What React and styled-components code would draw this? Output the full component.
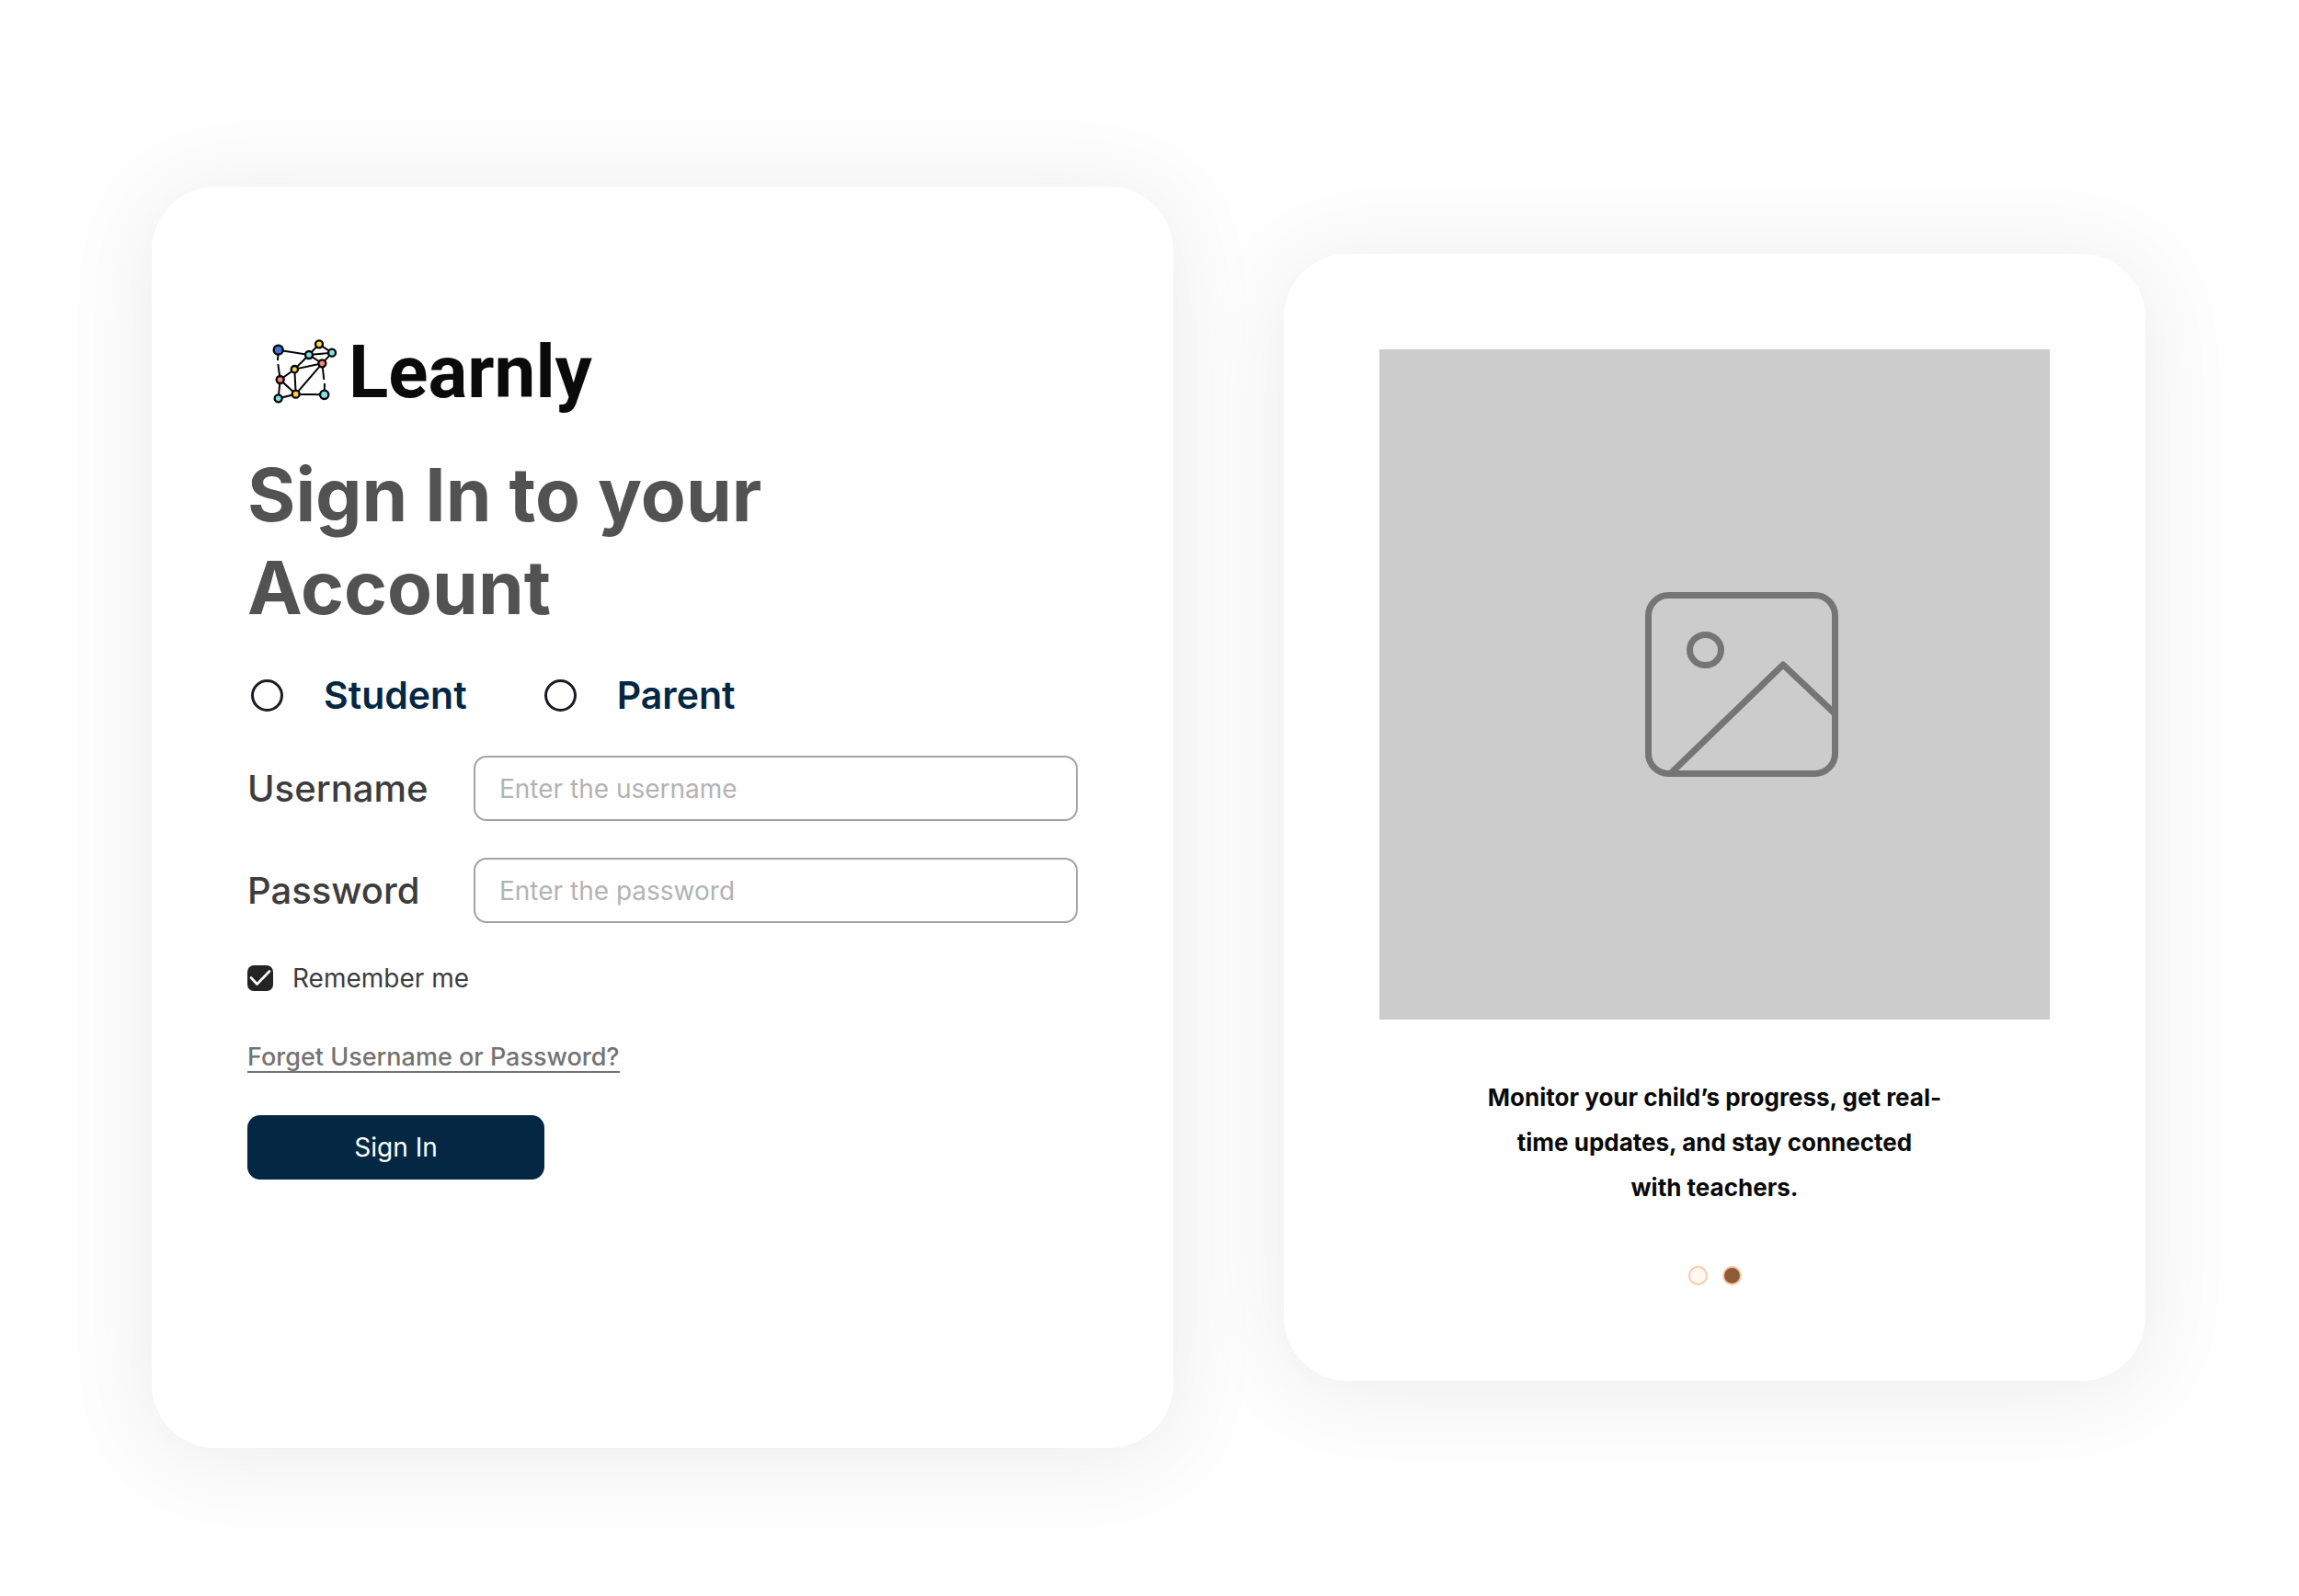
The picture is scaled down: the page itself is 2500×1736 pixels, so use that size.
import React, {useState} from 'react'
import styled, {createGlobalStyle} from 'styled-components'

const GlobalStyle = createGlobalStyle`
    *, *::before, *::after {
        box-sizing: border-box;
    }

    body {
        margin: 0;
        background: #fefefe;
        font-family: Inter, "Liberation Sans", sans-serif;
    }

    h1, p {
        margin: 0;
    }

    button, input {
        font-family: inherit;
        margin: 0;
    }
`

const Page = styled.main`
    display: grid;
    grid-template-columns: minmax(0, 1111fr) minmax(0, 937fr);
    align-items: center;
    gap: 120px;
    min-height: 100vh;
    padding: 203px 167px 162px 165px;
`

const Card = styled.section`
    border-radius: 70px;
    background: #fff;
    box-shadow: 0 8px 100px rgba(0, 0, 0, 0.08);
    padding: ${({$pad}) => $pad};
`

const Logo = styled.div`
    display: flex;
    align-items: center;
    gap: 11px;
    padding-left: 27px;
    margin-bottom: 34px;
`

const LogoName = styled.span`
    color: #0a0a0a;
    font-family: Roboto, Inter, sans-serif;
    font-size: 80px;
    font-weight: 700;
    line-height: 96px;
`

const Title = styled.h1`
    max-width: 700px;
    margin-bottom: 42px;
    color: #525252;
    font-size: 80px;
    font-weight: 700;
    line-height: 101px;
`

const Roles = styled.div`
    display: flex;
    gap: 84px;
    margin-bottom: 41px;
    padding-left: 4px;
`

const Role = styled.label`
    display: flex;
    align-items: center;
    gap: 44px;
    color: #042743;
    font-size: 41px;
    font-weight: 600;
    line-height: 50px;
`

const Radio = styled.input`
    appearance: none;
    width: 35px;
    height: 35px;
    border: 3px solid #1d1b20;
    border-radius: 50%;

    &:checked {
        background: #1d1b20;
        box-shadow: inset 0 0 0 5px #fff;
    }
`

const Field = styled.div`
    display: grid;
    grid-template-columns: 246px 1fr;
    align-items: center;
    margin-bottom: 40px;
`

const FieldLabel = styled.label`
    color: #3d3d3d;
    font-size: 40px;
    font-weight: 500;
    line-height: 50px;
`

const TextInput = styled.input`
    width: 100%;
    height: 71px;
    padding: 0 26px;
    border: 2px solid #a3a3a3;
    border-radius: 14px;
    background: #fff;
    color: #3d3d3d;
    font-size: 28px;

    &::placeholder {
        color: #b3b3b3;
        opacity: 1;
    }
`

const Remember = styled.label`
    display: flex;
    align-items: center;
    gap: 21px;
    margin: 43px 0 54px;
    color: #3d3d3d;
    font-size: 28px;
    line-height: 34px;
`

const Tick = styled.span`
    display: grid;

    > * {
        grid-area: 1 / 1;
    }
`

const Checkbox = styled.input`
    appearance: none;
    width: 28px;
    height: 28px;
    border: 2px solid #242424;
    border-radius: 7px;

    &:checked {
        background: #242424;
    }
`

const TickMark = styled.svg`
    pointer-events: none;
`

const ForgetLink = styled.a`
    display: table;
    margin-bottom: 46px;
    border-bottom: 2px solid #737373;
    color: #737373;
    font-size: 27px;
    font-weight: 500;
    line-height: 30px;
    text-decoration: none;
`

const SignInButton = styled.button`
    width: 323px;
    height: 70px;
    border: 0;
    border-radius: 14px;
    background: #042743;
    color: #fff;
    font-size: 28px;
    cursor: pointer;
`

const ImageBox = styled.div`
    display: flex;
    align-items: center;
    justify-content: center;
    aspect-ratio: 1;
    padding-left: 58px;
    background: #ccc;
`

const Caption = styled.p`
    max-width: 512px;
    margin: 60px auto 61px;
    color: #0a0a0a;
    font-size: 26px;
    font-weight: 700;
    line-height: 49px;
    text-align: center;
`

const Dots = styled.div`
    display: flex;
    justify-content: center;
    gap: 16px;
`

const Dot = styled.button`
    width: 21px;
    height: 21px;
    padding: 0;
    border: 2px solid #f8cba8;
    border-radius: 50%;
    background: ${({$active}) => $active ? '#8f5c38' : '#fff8f3'};
    cursor: pointer;
`

const edges = 'M68 93L168 109L201 74L243 102L168 109L121 156L211 137L168 109M243 102L211 137L125 237L121 156L74 190L125 237L218 239M74 190L68 251L125 237M68 93L66 127M67 139L74 190M211 137L217 190M219 202L218 239'

const nodes = [
    [68, 93, 15, '#3f73d8'],
    [201, 74, 12, '#fbdc3c'],
    [168, 109, 12, '#7fe3ea'],
    [243, 102, 12, '#7fe3ea'],
    [211, 137, 12, '#f9827c'],
    [121, 156, 11, '#fbd034'],
    [74, 190, 12, '#f9827c'],
    [125, 237, 12, '#fbd034'],
    [68, 251, 12, '#7fe3ea'],
    [218, 239, 14, '#7fe3ea'],
]

const LogoMark = () => (
    <svg width="72" height="72" viewBox="48 58 216 216" aria-hidden="true">
        <path d={edges} fill="none" stroke="#050505" strokeWidth="6" />
        {nodes.map(([x, y, r, fill]) => (
            <circle key={`${x}-${y}`} cx={x} cy={y} r={r} fill={fill} stroke="#050505" strokeWidth="7" />
        ))}
    </svg>
)

const Placeholder = () => (
    <svg width="210" height="201" viewBox="0 0 210 201" fill="none" stroke="#757575" strokeWidth="7" strokeLinejoin="round" aria-hidden="true">
        <rect x="3.5" y="3.5" width="203" height="194" rx="22" />
        <ellipse cx="65.5" cy="63" rx="17" ry="16.5" />
        <path d="M28 197L150 79L206 132" />
    </svg>
)

const App = () => {
    const [role, setRole] = useState('')
    const [remember, setRemember] = useState(true)
    const [slide, setSlide] = useState(1)

    return (
        <>
            <GlobalStyle />
            <Page>
                <Card as="form" $pad="154px 104px 292px" onSubmit={e => e.preventDefault()}>
                    <Logo>
                        <LogoMark />
                        <LogoName>Learnly</LogoName>
                    </Logo>
                    <Title>Sign In to your Account</Title>
                    <Roles>
                        {['Student', 'Parent'].map(name => (
                            <Role key={name}>
                                <Radio
                                    type="radio"
                                    name="role"
                                    checked={role === name}
                                    onChange={() => setRole(name)}
                                />
                                {name}
                            </Role>
                        ))}
                    </Roles>
                    <Field>
                        <FieldLabel htmlFor="username">Username</FieldLabel>
                        <TextInput id="username" type="text" placeholder="Enter the username" />
                    </Field>
                    <Field>
                        <FieldLabel htmlFor="password">Password</FieldLabel>
                        <TextInput id="password" type="password" placeholder="Enter the password" />
                    </Field>
                    <Remember>
                        <Tick>
                            <Checkbox
                                type="checkbox"
                                checked={remember}
                                onChange={() => setRemember(state => !state)}
                            />
                            {remember &&
                                <TickMark width="28" height="28" viewBox="0 0 28 28" fill="none" stroke="#fff" strokeWidth="2.6">
                                    <path d="M4 13.5L10.5 20.5L24 6.5" strokeLinecap="round" strokeLinejoin="round" />
                                </TickMark>
                            }
                        </Tick>
                        Remember me
                    </Remember>
                    <ForgetLink href="#forget">Forget Username or Password?</ForgetLink>
                    <SignInButton type="submit">Sign In</SignInButton>
                </Card>
                <Card $pad="104px">
                    <ImageBox>
                        <Placeholder />
                    </ImageBox>
                    <Caption>
                        Monitor your child’s progress, get real-time updates, and stay connected
                        <br />
                        with teachers.
                    </Caption>
                    <Dots>
                        {[0, 1].map(i => (
                            <Dot
                                key={i}
                                type="button"
                                aria-label={`Slide ${i + 1}`}
                                $active={slide === i}
                                onClick={() => setSlide(i)}
                            />
                        ))}
                    </Dots>
                </Card>
            </Page>
        </>
    )
}

export default App
